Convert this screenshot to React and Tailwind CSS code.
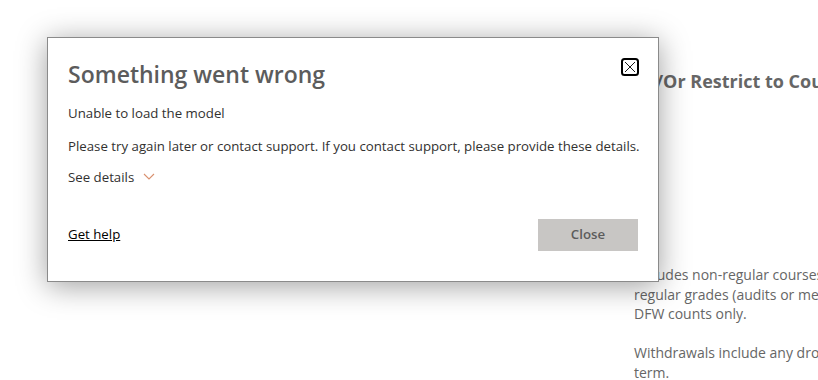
import { useState } from 'react';

const font = { fontFamily: '"Open Sans", "Noto Sans", Arial, sans-serif' };

function CloseIcon() {
  return (
    <svg width="18" height="18" viewBox="0 0 18 18" fill="none">
      <rect x="1" y="1" width="16" height="16" rx="2.5" stroke="#000" strokeWidth="2" />
      <path d="M4 4 L14 14 M14 4 L4 14" stroke="#1a1a1a" strokeWidth="1" />
    </svg>
  );
}

function Chevron() {
  return (
    <svg width="12" height="8" viewBox="0 0 12 8" fill="none">
      <path d="M1 1 L6 6 L11 1" stroke="#d9916f" strokeWidth="1.1" />
    </svg>
  );
}

export default function App() {
  const [open, setOpen] = useState(true);

  return (
    <div className="relative w-[818px] h-[380px] overflow-hidden bg-white" style={font}>
      {/* Page behind the dialog */}
      <div className="pl-[634px] pt-[69px] text-[#666666]">
        <h2 className="-ml-[14px] text-[18px] font-bold whitespace-nowrap leading-6">And/Or Restrict to Courses</h2>
        <div className="mt-[172px] text-[14px] leading-[19.5px] w-[200px] whitespace-nowrap">
          <p>Includes non-regular courses</p>
          <p>regular grades (audits or merit</p>
          <p>DFW counts only.</p>
          <p className="mt-[19.5px]">Withdrawals include any drops</p>
          <p>term.</p>
        </div>
      </div>

      {open && (
        <div className="absolute left-[47px] top-[37px] w-[612px] h-[245px] bg-white border border-[#8a8a8a] shadow-[0_4px_28px_rgba(0,0,0,0.38)] text-[#323130]">
          <div className="flex items-start justify-between pl-[20px] pr-[19px] pt-[20px]">
            <h1 className="text-[23px] font-semibold text-[#5c5c5c] leading-[32px]">Something went wrong</h1>
            <button onClick={() => setOpen(false)}>
              <CloseIcon />
            </button>
          </div>
          <div className="pl-[20px] pr-[10px] text-[13.25px] leading-[18px]">
            <p className="mt-[14px]">Unable to load the model</p>
            <p className="mt-[15px] whitespace-nowrap">Please try again later or contact support. If you contact support, please provide these details.</p>
            <button className="mt-[13px] flex items-center gap-[9px] text-[#323130]">
              See details <Chevron />
            </button>
          </div>
          <div className="flex items-center justify-between pl-[20px] pr-[20px] mt-[33px]">
            <a href="#" className="text-[13.25px] text-black underline">Get help</a>
            <button onClick={() => setOpen(false)} className="w-[100px] h-[32px] bg-[#c8c6c4] text-[#5c5c5c] text-[13.25px] font-semibold">
              Close
            </button>
          </div>
        </div>
      )}
    </div>
  );
}
